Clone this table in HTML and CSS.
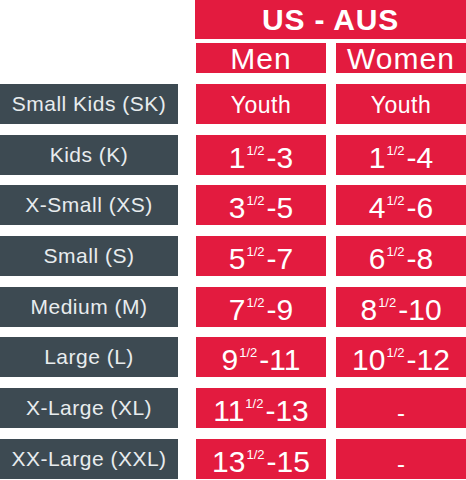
FILE: index.html
```html
<!DOCTYPE html>
<html lang="en">
<head>
    <meta charset="UTF-8">
    <meta name="viewport" content="width=device-width, initial-scale=1.0">
    <title>Size Chart</title>
    <link rel="stylesheet" href="styles.css">
</head>
<body>
    <div class="chart">
        <div class="head">
            <div class="title">US - AUS</div>
            <div class="sub">
                <div class="sub-cell">Men</div>
                <div class="sub-cell">Women</div>
            </div>
        </div>

        <div class="rows">
            <div class="row">
                <div class="label">Small Kids (SK)</div>
                <div class="cell youth">Youth</div>
                <div class="cell youth">Youth</div>
            </div>
            <div class="row">
                <div class="label">Kids (K)</div>
                <div class="cell">1<sup>1/2</sup>-3</div>
                <div class="cell">1<sup>1/2</sup>-4</div>
            </div>
            <div class="row">
                <div class="label">X-Small (XS)</div>
                <div class="cell">3<sup>1/2</sup>-5</div>
                <div class="cell">4<sup>1/2</sup>-6</div>
            </div>
            <div class="row">
                <div class="label">Small (S)</div>
                <div class="cell">5<sup>1/2</sup>-7</div>
                <div class="cell">6<sup>1/2</sup>-8</div>
            </div>
            <div class="row">
                <div class="label">Medium (M)</div>
                <div class="cell">7<sup>1/2</sup>-9</div>
                <div class="cell">8<sup>1/2</sup>-10</div>
            </div>
            <div class="row">
                <div class="label">Large (L)</div>
                <div class="cell">9<sup>1/2</sup>-11</div>
                <div class="cell">10<sup>1/2</sup>-12</div>
            </div>
            <div class="row">
                <div class="label">X-Large (XL)</div>
                <div class="cell">11<sup>1/2</sup>-13</div>
                <div class="cell none">-</div>
            </div>
            <div class="row">
                <div class="label">XX-Large (XXL)</div>
                <div class="cell">13<sup>1/2</sup>-15</div>
                <div class="cell none">-</div>
            </div>
        </div>
    </div>
</body>
</html>
```

FILE: styles.css
```css
body {
    margin: 0;
    background-color: #fff;
    font-family: "Liberation Sans", Arial, sans-serif;
}

.chart {
    width: 466px;
}

.head {
    margin-left: 195px;
}

.title {
    height: 39px;
    background-color: #e31b3f;
    color: #fff;
    font-size: 30px;
    font-weight: bold;
    letter-spacing: 0.8px;
    line-height: 40px;
    text-align: center;
}

.sub {
    display: flex;
    gap: 10px;
    margin-top: 4px;
    padding-left: 1px;
}

.sub-cell {
    width: 130px;
    height: 30px;
    background-color: #e31b3f;
    color: #fff;
    font-size: 30px;
    letter-spacing: 1px;
    line-height: 31px;
    text-align: center;
}

.rows {
    display: flex;
    flex-direction: column;
    gap: 10.7px;
    margin-top: 11px;
}

.row {
    display: flex;
    gap: 10px;
    height: 40px;
}

.label {
    width: 178px;
    margin-right: 8px;
    background-color: #3d4a52;
    color: #e8ecee;
    font-size: 21px;
    letter-spacing: 0.5px;
    display: flex;
    align-items: center;
    justify-content: center;
}

.cell {
    width: 130px;
    height: 40px;
    box-sizing: border-box;
    padding-top: 3px;
    background-color: #e31b3f;
    color: #fff;
    font-size: 30px;
    line-height: 40px;
    text-align: center;
    overflow: hidden;
}

.cell sup {
    font-size: 13px;
    line-height: 0;
    vertical-align: 13px;
    margin: 0 2px 0 1px;
}

.youth {
    font-size: 23px;
    letter-spacing: 0.5px;
    padding-top: 1px;
}

.none {
    font-size: 24px;
    padding-top: 5px;
}
```
